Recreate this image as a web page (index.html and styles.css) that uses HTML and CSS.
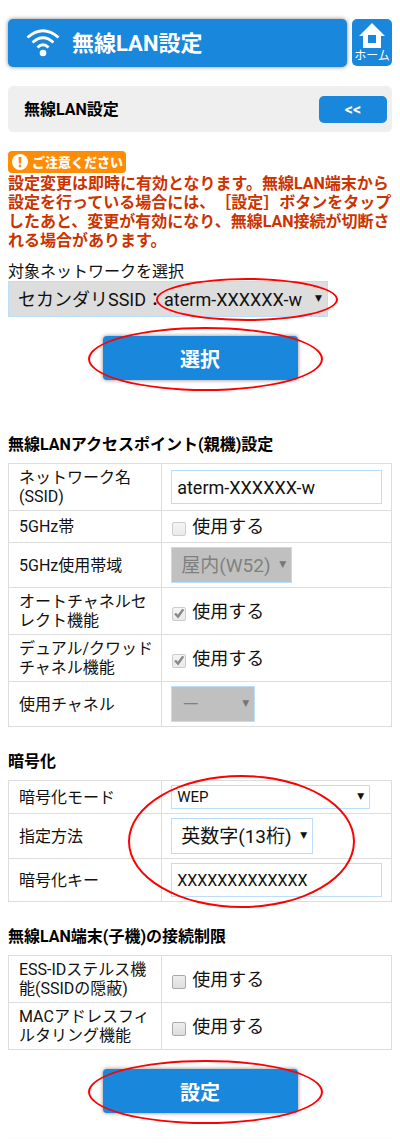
FILE: index.html
```html
<!DOCTYPE html>
<html lang="ja">
  <head>
    <meta charset="UTF-8" />
    <meta name="viewport" content="width=device-width, initial-scale=1.0" />
    <title>無線LAN設定</title>
    <link rel="stylesheet" href="styles.css">
  </head>
  <body>
    <header class="header">
      <h1>
        <svg class="wifi" viewBox="0 0 34 28" aria-hidden="true">
          <path d="M1.500 8.500Q17-5 32.500 8.500M6.500 13.500Q17 4 27.500 13.500M11.500 18.500Q17 13 22.500 18.500" fill="none" stroke="#fff" stroke-width="2.800" />
          <circle cx="17" cy="24" r="3.300" fill="#fff" />
        </svg>
        無線LAN設定
      </h1>
      <a class="home" href="#">
        <svg viewBox="0 0 26 25" aria-hidden="true">
          <path d="M13 0L26 13H22V25H4V13H0ZM9 12V20H17V12Z" fill="#fff" fill-rule="evenodd" />
        </svg>
        <span>ホーム</span>
      </a>
    </header>
    <main>
      <div class="title-bar">
        <span>無線LAN設定</span>
        <button type="button" class="back">&lt;&lt;</button>
      </div>

      <div class="notice">
        <span class="badge">
          <svg viewBox="0 0 16 16" aria-hidden="true">
            <circle cx="8" cy="8" r="8" fill="#fff" />
            <path d="M6.500 3H9.500L9 9.500H7Z" fill="#ff8c05" />
            <circle cx="8" cy="12" r="1.400" fill="#ff8c05" />
          </svg>
          ご注意ください
        </span>
        <p>設定変更は即時に有効となります。無線LAN端末から設定を行っている場合には、［設定］ボタンをタップしたあと、変更が有効になり、無線LAN接続が切断される場合があります。</p>
      </div>

      <form>
        <label class="network-label" for="network">対象ネットワークを選択</label>
        <div class="select network">
          <select id="network"><option>セカンダリSSID：aterm-XXXXXX-w</option></select>
          <span class="ring ring-network"></span>
        </div>
        <div class="submit">
          <button type="button">選択</button>
          <span class="ring ring-button"></span>
        </div>

        <h2 class="first">無線LANアクセスポイント(親機)設定</h2>
        <table>
          <tr>
            <th><label for="ssid">ネットワーク名(SSID)</label></th>
            <td><input type="text" id="ssid" value="aterm-XXXXXX-w"></td>
          </tr>
          <tr>
            <th>5GHz帯</th>
            <td><label class="check"><input type="checkbox" disabled>使用する</label></td>
          </tr>
          <tr>
            <th><label for="band">5GHz使用帯域</label></th>
            <td><div class="select band"><select id="band" disabled><option>屋内(W52)</option></select></div></td>
          </tr>
          <tr>
            <th>オートチャネルセレクト機能</th>
            <td><label class="check"><input type="checkbox" checked disabled>使用する</label></td>
          </tr>
          <tr>
            <th>デュアル/クワッドチャネル機能</th>
            <td><label class="check"><input type="checkbox" checked disabled>使用する</label></td>
          </tr>
          <tr>
            <th><label for="channel">使用チャネル</label></th>
            <td><div class="select channel"><select id="channel" disabled><option>－</option></select></div></td>
          </tr>
        </table>

        <h2>暗号化</h2>
        <div class="marked">
          <table>
            <tr>
              <th><label for="mode">暗号化モード</label></th>
              <td><div class="select mode"><select id="mode"><option>WEP</option></select></div></td>
            </tr>
            <tr>
              <th><label for="method">指定方法</label></th>
              <td><div class="select method"><select id="method"><option>英数字(13桁)</option></select></div></td>
            </tr>
            <tr>
              <th><label for="key">暗号化キー</label></th>
              <td><input type="text" id="key" class="key" value="XXXXXXXXXXXXX"></td>
            </tr>
          </table>
          <span class="ring ring-table"></span>
        </div>

        <h2>無線LAN端末(子機)の接続制限</h2>
        <table>
          <tr>
            <th>ESS-IDステルス機能(SSIDの隠蔽)</th>
            <td><label class="check"><input type="checkbox">使用する</label></td>
          </tr>
          <tr>
            <th>MACアドレスフィルタリング機能</th>
            <td><label class="check"><input type="checkbox">使用する</label></td>
          </tr>
        </table>
        <div class="submit">
          <button type="button">設定</button>
          <span class="ring ring-button"></span>
        </div>
      </form>
    </main>
    <footer></footer>
  </body>
</html>
```
FILE: styles.css
```css
* {
    box-sizing: border-box;
}

body {
    margin: 0;
    padding: 19px 8px 8px;
    background: #fff;
    color: #111;
    font-family: Roboto, "Noto Sans CJK JP", sans-serif;
    font-size: 16px;
    line-height: 19px;
    text-spacing-trim: space-all;
}

button,
input,
select {
    font-family: inherit;
}

/* header */
.header {
    display: flex;
    gap: 5px;
}

h1 {
    display: flex;
    flex: 1;
    align-items: center;
    gap: 12px;
    height: 48px;
    margin: 0;
    padding: 0 18px;
    border-radius: 5px;
    background: #1987db;
    box-shadow: 0 0 4px #888;
    color: #fff;
    font-size: 22px;
}

.wifi {
    width: 34px;
    height: 28px;
}

.home {
    display: flex;
    flex-direction: column;
    align-items: center;
    width: 40px;
    height: 47px;
    padding-top: 4px;
    border-radius: 5px;
    background: #1987db;
    color: #fff;
    font-size: 12px;
    line-height: 17px;
    text-decoration: none;
}

.home svg {
    width: 26px;
    height: 25px;
}

.title-bar {
    display: flex;
    align-items: center;
    justify-content: space-between;
    height: 46px;
    margin-top: 19px;
    padding: 0 5px 0 16px;
    border-radius: 5px;
    background: #efefef;
    color: #000;
    font-weight: bold;
}

.back {
    width: 68px;
    height: 27px;
    border: 0;
    border-radius: 5px;
    background: #1987db;
    color: #fff;
    font-size: 16px;
    font-weight: bold;
}

/* notice */
.notice {
    margin-top: 19px;
    color: #cc3300;
    font-weight: bold;
}

.badge {
    display: flex;
    align-items: center;
    gap: 4px;
    width: 118px;
    height: 22px;
    padding-left: 4px;
    border-radius: 4px;
    background: #ff8c05;
    color: #fff;
    font-size: 13px;
    font-weight: 900;
    white-space: nowrap;
}

.badge svg {
    flex: none;
    width: 16px;
    height: 16px;
}

.notice p {
    margin: 0;
    padding: 1px 0;
}

/* form controls */
.network-label {
    display: block;
    margin-top: 11px;
}

.select {
    position: relative;
    height: 36px;
}

.select::after {
    content: "▼";
    position: absolute;
    top: 0;
    right: 6px;
    font-family: "DejaVu Sans", sans-serif;
    font-size: 9px;
    line-height: 34px;
    pointer-events: none;
}

select,
input[type="text"] {
    display: block;
    width: 100%;
    height: 100%;
    margin: 0;
    padding: 0 9px;
    border: 1px solid #bbdefb;
    border-radius: 0;
    background: #fff;
    color: #111;
    font-size: 19px;
    -webkit-appearance: none;
    appearance: none;
}

input[type="text"] {
    height: 34px;
    padding: 0 5px;
    font-size: 18px;
}

input.key {
    font-size: 16px;
}

select:disabled {
    background: #c0c0c0;
    color: #808080;
    opacity: 1;
}

.network {
    width: 320px;
}

.network select {
    background: #ddd;
    font-size: 18px;
}

.band {
    width: 121px;
}

.channel {
    width: 84px;
}

.band::after,
.channel::after {
    color: #777;
}

.mode {
    width: 199px;
    height: 24px;
}

.mode select {
    padding: 0 5px;
    font-size: 15px;
}

.mode::after {
    line-height: 23px;
}

.method {
    width: 142px;
}

.check {
    display: flex;
    align-items: center;
    gap: 6px;
    font-size: 18px;
    line-height: 23px;
}

.check input {
    display: grid;
    place-items: center;
    width: 14px;
    height: 14px;
    margin: 5px 0 0 1px;
    border: 1px solid #aaa;
    border-radius: 2px;
    background: linear-gradient(#eee, #ddd);
    -webkit-appearance: none;
    appearance: none;
}

.check input:disabled {
    border-color: #ccc;
    background: linear-gradient(#f4f4f4, #eaeaea);
}

.check input:checked::before {
    content: "";
    width: 10px;
    height: 10px;
    background: #888;
    clip-path: polygon(0 58%, 18% 42%, 36% 62%, 82% 0, 100% 14%, 40% 100%);
}

.submit {
    position: relative;
    width: 195px;
    margin: 19px auto 0;
}

.submit button {
    display: block;
    width: 100%;
    height: 44px;
    border: 0;
    border-radius: 4px;
    background: #1987db;
    box-shadow: 0 0 4px #888;
    color: #fff;
    font-size: 20px;
    font-weight: bold;
}

/* settings tables */
h2 {
    margin: 25px 0 9px;
    color: #000;
    font-size: 16px;
}

h2.first {
    margin-top: 55px;
}

table {
    width: 100%;
    border-collapse: collapse;
    table-layout: fixed;
}

th,
td {
    padding: 4px 9px;
    border: 1px solid #ddd;
}

th {
    width: 40%;
    padding: 4px 6px 4px 10px;
    font-weight: normal;
    text-align: left;
}

/* red marks over the controls to use */
.marked {
    position: relative;
}

.ring {
    position: absolute;
    border: 2px solid #ff0000;
    border-radius: 50%;
    pointer-events: none;
}

.ring-network {
    top: -3px;
    right: -10px;
    width: 182px;
    height: 43px;
}

.ring-button {
    top: -9px;
    left: -15px;
    width: 235px;
    height: 64px;
}

.ring-table {
    top: -5px;
    left: 120px;
    width: 227px;
    height: 133px;
}

footer {
    margin-top: 25px;
    border-top: 1px solid #fafafa;
}
```
